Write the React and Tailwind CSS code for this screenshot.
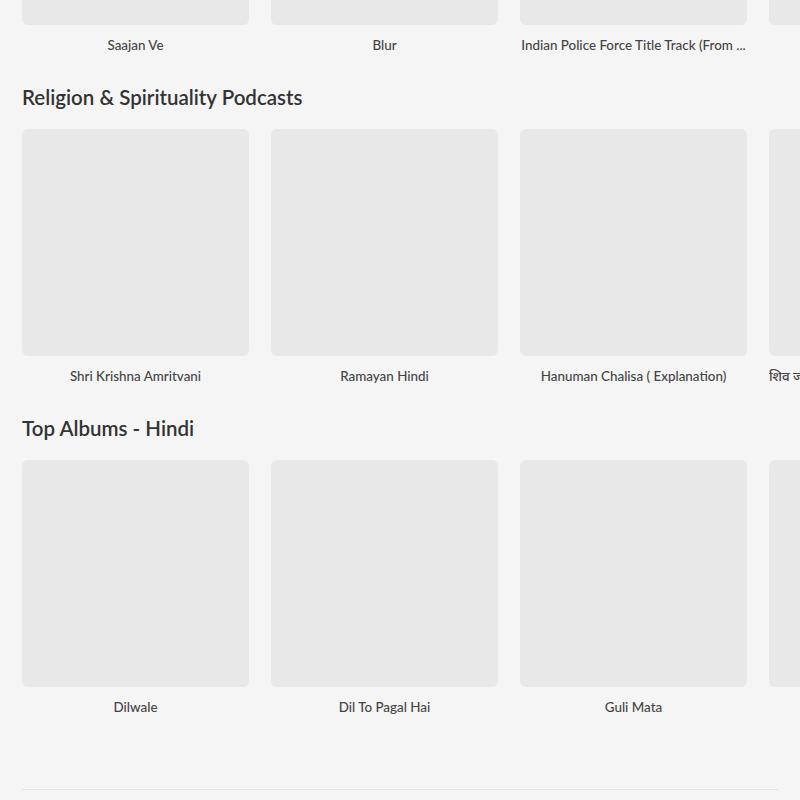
const sections = [
  {
    title: "Trending Now",
    items: ["Saajan Ve", "Blur", "Indian Police Force Title Track (From ...", "Tauba Tauba"],
    hideTitle: true,
  },
  {
    title: "Religion & Spirituality Podcasts",
    items: [
      "Shri Krishna Amritvani",
      "Ramayan Hindi",
      "Hanuman Chalisa ( Explanation)",
      "शिव जी की कथाएं और भजन - भक्ति संगीत और कहानियां",
    ],
  },
  {
    title: "Top Albums - Hindi",
    items: ["Dilwale", "Dil To Pagal Hai", "Guli Mata", "Aashiqui 2"],
  },
];

export default function App() {
  return (
    <div
      className="h-[800px] w-[800px] overflow-hidden bg-[#f5f5f5] text-[#333]"
      style={{ fontFamily: "Lato, 'Noto Sans', sans-serif" }}
    >
      <div className="-mt-[202px]">
        {sections.map((s, i) => (
          <section key={s.title} className={i === 0 ? "" : "mt-[29px]"}>
            {!s.hideTitle && (
              <h2 className="h-[28px] pl-[22px] text-[20.5px] font-semibold leading-[28px] text-[#333]">{s.title}</h2>
            )}
            <div className={`flex gap-[22px] pl-[22px] ${s.hideTitle ? "" : "mt-[18px]"}`}>
              {s.items.map((it) => (
                <div key={it} className="w-[227px] shrink-0">
                  <div className="h-[227px] w-[227px] rounded-[6px] bg-[#e8e8e8]" />
                  <p className="mt-[11px] overflow-hidden whitespace-nowrap text-center text-[13.4px] font-medium leading-[18px] text-[#444]">
                    {it}
                  </p>
                </div>
              ))}
            </div>
          </section>
        ))}
        <div className="mx-[22px] mt-[73px] border-t border-[#e4e4e4]" />
      </div>
    </div>
  );
}
